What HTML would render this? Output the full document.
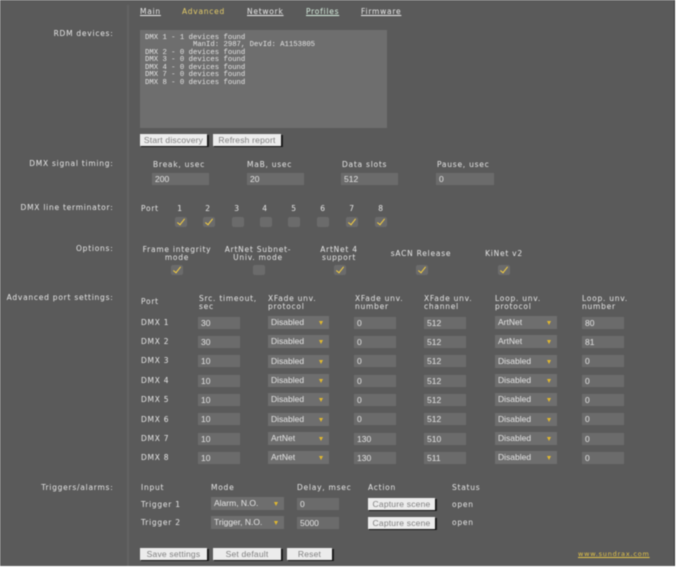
<!DOCTYPE html>
<html><head><meta charset="utf-8"><style>
html,body{margin:0;padding:0;background:#fff}
#p{position:absolute;left:0;top:0;width:675px;height:566px;background:#5a5a5a;overflow:hidden;font:7.5px "DejaVu Sans",sans-serif;letter-spacing:.75px;color:#e6e6e6;filter:blur(.5px);border-right:1px solid #333;box-sizing:border-box}
#p span,#p a,#p i,#p b{position:absolute;white-space:nowrap;line-height:8px;font-style:normal;font-weight:normal}
.l{right:560.5px;text-align:right}
.c{transform:translateX(-50%);text-align:center}
a{text-decoration:underline;color:#e8e8e8}
.in,.s{background:#6b6b6b;color:#e4e4e4;height:12px;font:8.5px/12px "Liberation Sans",sans-serif!important;letter-spacing:0!important;line-height:12px!important;text-indent:3px}
.s{background:#6e6e6e;height:13px;line-height:13px!important}
.s:after{content:"";position:absolute;right:6px;top:5px;border:2.5px solid transparent;border-top:4px solid #e0b830;border-bottom:0}
.b{background:#ececec;color:#808080;height:12px;text-align:center;font:8.5px/12px "Liberation Sans",sans-serif!important;letter-spacing:.2px!important;line-height:12px!important;box-shadow:1px 1px 0 #111,2px 1px 0 #222}
.k{background:#6b6b6b;width:12px;height:10px;border-radius:2px}
.k.y:after{content:"";position:absolute;left:4px;top:0;width:3px;height:7px;border:solid #f8d040;border-width:0 1.6px 1.6px 0;transform:rotate(38deg)}
</style></head><body><div id="p">
<div style="position:absolute;left:127px;top:5px;width:2px;height:561px;background:#636363"></div>
<a style="position:absolute;left:140px;top:8px;line-height:8px">Main</a>
<a style="position:absolute;left:182px;top:8px;line-height:8px;color:#e4cc68;text-decoration:none">Advanced</a>
<a style="position:absolute;left:247px;top:8px;line-height:8px">Network</a>
<a style="position:absolute;left:306px;top:8px;line-height:8px;color:#d8f0e0">Profiles</a>
<a style="position:absolute;left:361px;top:8px;line-height:8px">Firmware</a>

<span class="l" style="top:30px">RDM devices:</span>
<div style="position:absolute;left:140px;top:30px;width:247px;height:98px;background:#6e6e6e"></div>
<pre style="position:absolute;left:145px;top:34.5px;margin:0;font:7.27px/7.5px 'Liberation Mono',monospace;letter-spacing:0;color:#e4e4e4">DMX 1 - 1 devices found
           ManId: 2987, DevId: A1153805
DMX 2 - 0 devices found
DMX 3 - 0 devices found
DMX 4 - 0 devices found
DMX 7 - 0 devices found
DMX 8 - 0 devices found</pre>
<span class="b" style="left:140px;top:134px;width:67px">Start discovery</span>
<span class="b" style="left:213px;top:134px;width:68px">Refresh report</span>

<span class="l" style="top:160px">DMX signal timing:</span>
<span style="left:153px;top:161px">Break, usec</span>
<span style="left:247px;top:161px">MaB, usec</span>
<span style="left:342px;top:161px">Data slots</span>
<span style="left:437px;top:161px">Pause, usec</span>
<span class="in" style="left:152px;top:173px;width:57px">200</span>
<span class="in" style="left:247px;top:173px;width:57px">20</span>
<span class="in" style="left:341px;top:173px;width:57px">512</span>
<span class="in" style="left:436px;top:173px;width:58px">0</span>

<span class="l" style="top:204px">DMX line terminator:</span>
<span style="left:141px;top:205px">Port</span>
<span class="c" style="left:180px;top:205px">1</span>
<span class="c" style="left:208px;top:205px">2</span>
<span class="c" style="left:237px;top:205px">3</span>
<span class="c" style="left:265px;top:205px">4</span>
<span class="c" style="left:294px;top:205px">5</span>
<span class="c" style="left:323px;top:205px">6</span>
<span class="c" style="left:352px;top:205px">7</span>
<span class="c" style="left:381px;top:205px">8</span>
<i class="k y" style="left:175px;top:217px"></i>
<i class="k y" style="left:203px;top:217px"></i>
<i class="k" style="left:232px;top:217px"></i>
<i class="k" style="left:260px;top:217px"></i>
<i class="k" style="left:288px;top:217px"></i>
<i class="k" style="left:317px;top:217px"></i>
<i class="k y" style="left:346px;top:217px"></i>
<i class="k y" style="left:375px;top:217px"></i>

<span class="l" style="top:245px">Options:</span>
<span class="c" style="left:177px;top:246px;line-height:8px">Frame integrity<br>mode</span>
<span class="c" style="left:258px;top:246px">ArtNet Subnet-<br>Univ. mode</span>
<span class="c" style="left:339px;top:246px">ArtNet 4<br>support</span>
<span class="c" style="left:421px;top:250px">sACN Release</span>
<span class="c" style="left:504px;top:250px">KiNet v2</span>
<i class="k y" style="left:171px;top:265px"></i>
<i class="k" style="left:253px;top:265px"></i>
<i class="k y" style="left:334px;top:265px"></i>
<i class="k y" style="left:416px;top:265px"></i>
<i class="k y" style="left:498px;top:265px"></i>

<span class="l" style="top:294px">Advanced port settings:</span>
<span style="left:141px;top:298px">Port</span>
<span style="left:199px;top:295px">Src. timeout,<br>sec</span>
<span style="left:268px;top:295px">XFade unv.<br>protocol</span>
<span style="left:355px;top:295px">XFade unv.<br>number</span>
<span style="left:424px;top:295px">XFade unv.<br>channel</span>
<span style="left:495px;top:295px">Loop. unv.<br>protocol</span>
<span style="left:582px;top:295px">Loop. unv.<br>number</span>

<span style="left:141px;top:319px">DMX 1</span><span class="in" style="left:198px;top:317px;width:42px">30</span><span class="s" style="left:268px;top:316px;width:61px">Disabled</span><span class="in" style="left:354px;top:317px;width:42px">0</span><span class="in" style="left:424px;top:317px;width:42px">512</span><span class="s" style="left:495px;top:316px;width:62px">ArtNet</span><span class="in" style="left:582px;top:317px;width:42px">80</span>
<span style="left:141px;top:338px">DMX 2</span><span class="in" style="left:198px;top:336px;width:42px">30</span><span class="s" style="left:268px;top:335px;width:61px">Disabled</span><span class="in" style="left:354px;top:336px;width:42px">0</span><span class="in" style="left:424px;top:336px;width:42px">512</span><span class="s" style="left:495px;top:335px;width:62px">ArtNet</span><span class="in" style="left:582px;top:336px;width:42px">81</span>
<span style="left:141px;top:357px">DMX 3</span><span class="in" style="left:198px;top:355px;width:42px">10</span><span class="s" style="left:268px;top:355px;width:61px">Disabled</span><span class="in" style="left:354px;top:355px;width:42px">0</span><span class="in" style="left:424px;top:355px;width:42px">512</span><span class="s" style="left:495px;top:355px;width:62px">Disabled</span><span class="in" style="left:582px;top:355px;width:42px">0</span>
<span style="left:141px;top:377px">DMX 4</span><span class="in" style="left:198px;top:375px;width:42px">10</span><span class="s" style="left:268px;top:374px;width:61px">Disabled</span><span class="in" style="left:354px;top:375px;width:42px">0</span><span class="in" style="left:424px;top:375px;width:42px">512</span><span class="s" style="left:495px;top:374px;width:62px">Disabled</span><span class="in" style="left:582px;top:375px;width:42px">0</span>
<span style="left:141px;top:396px">DMX 5</span><span class="in" style="left:198px;top:394px;width:42px">10</span><span class="s" style="left:268px;top:393px;width:61px">Disabled</span><span class="in" style="left:354px;top:394px;width:42px">0</span><span class="in" style="left:424px;top:394px;width:42px">512</span><span class="s" style="left:495px;top:393px;width:62px">Disabled</span><span class="in" style="left:582px;top:394px;width:42px">0</span>
<span style="left:141px;top:416px">DMX 6</span><span class="in" style="left:198px;top:413px;width:42px">10</span><span class="s" style="left:268px;top:413px;width:61px">Disabled</span><span class="in" style="left:354px;top:413px;width:42px">0</span><span class="in" style="left:424px;top:413px;width:42px">512</span><span class="s" style="left:495px;top:413px;width:62px">Disabled</span><span class="in" style="left:582px;top:413px;width:42px">0</span>
<span style="left:141px;top:435px">DMX 7</span><span class="in" style="left:198px;top:433px;width:42px">10</span><span class="s" style="left:268px;top:432px;width:61px">ArtNet</span><span class="in" style="left:354px;top:433px;width:42px">130</span><span class="in" style="left:424px;top:433px;width:42px">510</span><span class="s" style="left:495px;top:432px;width:62px">Disabled</span><span class="in" style="left:582px;top:433px;width:42px">0</span>
<span style="left:141px;top:454px">DMX 8</span><span class="in" style="left:198px;top:452px;width:42px">10</span><span class="s" style="left:268px;top:451px;width:61px">ArtNet</span><span class="in" style="left:354px;top:452px;width:42px">130</span><span class="in" style="left:424px;top:452px;width:42px">511</span><span class="s" style="left:495px;top:451px;width:62px">Disabled</span><span class="in" style="left:582px;top:452px;width:42px">0</span>

<span class="l" style="top:484px">Triggers/alarms:</span>
<span style="left:141px;top:484px">Input</span>
<span style="left:211px;top:484px">Mode</span>
<span style="left:297px;top:484px">Delay, msec</span>
<span style="left:368px;top:484px">Action</span>
<span style="left:452px;top:484px">Status</span>
<span style="left:141px;top:500.5px">Trigger 1</span>
<span class="s" style="left:211px;top:497px;width:73px">Alarm, N.O.</span>
<span class="in" style="left:297px;top:498px;width:42px">0</span>
<span class="b" style="left:368px;top:498px;width:67px">Capture scene</span>
<span style="left:452px;top:500.5px">open</span>
<span style="left:141px;top:519px">Trigger 2</span>
<span class="s" style="left:211px;top:516px;width:73px">Trigger, N.O.</span>
<span class="in" style="left:297px;top:516.5px;width:42px">5000</span>
<span class="b" style="left:368px;top:516.5px;width:67px">Capture scene</span>
<span style="left:452px;top:519px">open</span>

<span class="b" style="left:140px;top:548px;width:67px">Save settings</span>
<span class="b" style="left:213px;top:548px;width:68px">Set default</span>
<span class="b" style="left:287px;top:548px;width:45px">Reset</span>
<a style="position:absolute;left:578px;top:550px;line-height:8px;color:#e4c448;font-size:6.5px;letter-spacing:.8px">www.sundrax.com</a>
</div></body></html>
